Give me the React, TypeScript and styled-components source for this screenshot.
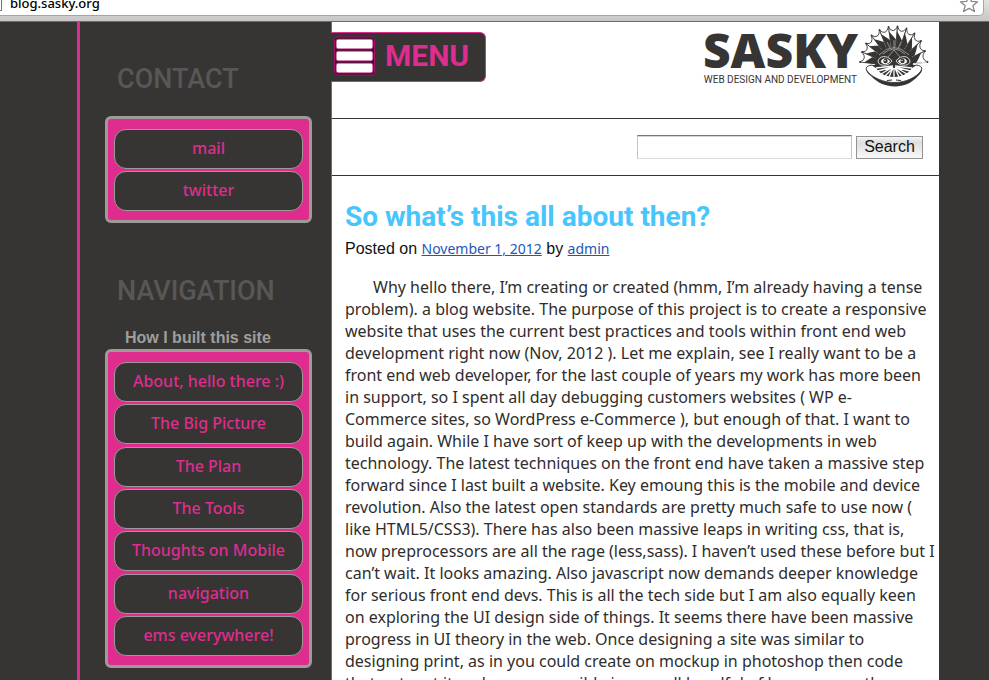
import React from "react";
import styled, { createGlobalStyle } from "styled-components";

const ink = "#373533";
const pink = "#de2d8e";
const sans = '"Noto Sans", sans-serif';
const grotesk = '"Liberation Sans", sans-serif';
const display = 'Roboto, "Noto Sans", sans-serif';

const GlobalStyle = createGlobalStyle`
  * { box-sizing: border-box; }
  body { margin: 0; background: ${ink}; color: #2f2d2c; font-family: ${sans}; }
  h1, h2, h3, p, ul { margin: 0; padding: 0; }
  ul { list-style: none; }
`;

const Page = styled.div`
  height: 100vh;
  display: flex;
  flex-direction: column;
  overflow: hidden;
`;

const BrowserBar = styled.div`
  flex: none;
  height: 22px;
  padding-right: 5px;
  background: linear-gradient(#e2e2e2, #c6c6c6);
  border-bottom: 1px solid #6b6b6b;
`;

const AddressField = styled.div`
  height: 16px;
  display: flex;
  justify-content: space-between;
  background: #fff;
  border: solid #a5a5a5;
  border-width: 0 1px 1px 0;
  border-radius: 0 0 5px 0;
  overflow: hidden;
`;

const PageIcon = styled.span`
  flex: none;
  width: 2px;
  height: 11px;
  border: solid #777;
  border-width: 0 1px 1px 0;
`;

const AddressInput = styled.input`
  flex: 1;
  height: 18px;
  margin-top: -6px;
  padding: 0 0 0 8px;
  border: 0;
  background: transparent;
  color: #000;
  font: 500 13px/18px ${sans};
  outline: 0;
`;

const StarButton = styled.button`
  width: 20px;
  height: 20px;
  margin: -6px 4px 0 0;
  padding: 0;
  border: 0;
  background: transparent;
`;

const Columns = styled.div`
  flex: 1;
  min-height: 0;
  display: flex;
  padding: 0 50px 0 77px;
`;

const Sidebar = styled.aside`
  flex: none;
  width: 254px;
  padding: 40px 19px 0 25px;
  border-left: 3px solid ${pink};
`;

const SideHeading = styled.h2`
  padding-left: 12px;
  color: #595756;
  font: 500 27px/34px ${display};
`;

const SideSection = styled.section`
  margin-bottom: 51px;
`;

const SideLabel = styled.h3`
  margin-top: 20px;
  padding-left: 20px;
  color: #a09e9b;
  font: bold 16px/20px ${grotesk};
`;

const LinkPanel = styled.ul<{ $top: number; $height: number }>`
  display: flex;
  flex-direction: column;
  justify-content: space-between;
  min-height: ${(p) => p.$height}px;
  margin-top: ${(p) => p.$top}px;
  padding: 10px 6px 9px;
  background: ${pink};
  border: 3px solid #9d9b98;
  border-radius: 6px;
`;

const PanelLink = styled.a`
  display: block;
  height: 40px;
  background: ${ink};
  border: 1px solid #9d9b98;
  border-radius: 12px;
  color: ${pink};
  font: 500 16px/36px ${sans};
  text-align: center;
  text-decoration: none;
`;

const Main = styled.main`
  flex: 1;
  min-width: 0;
  background: #fff;
  border-left: 1px solid ${pink};
`;

const Header = styled.header`
  height: 97px;
  display: flex;
  justify-content: space-between;
  align-items: flex-start;
  padding-right: 10px;
  border-bottom: 1px solid ${ink};
`;

const MenuButton = styled.button`
  display: flex;
  align-items: center;
  gap: 9px;
  width: 155px;
  height: 50px;
  margin: 10px 0 0 -1px;
  padding: 0 0 2px 3px;
  background: ${ink};
  border: 1px solid ${pink};
  border-left: 0;
  border-radius: 0 6px 6px 0;
  color: ${pink};
  font: 700 30px/34px ${display};
`;

const Logo = styled.a`
  display: flex;
  margin-top: 3px;
  gap: 1px;
  color: ${ink};
  text-decoration: none;
`;

const LogoText = styled.span`
  display: flex;
  flex-direction: column;
  align-items: center;
`;

const LogoName = styled.span`
  font: 800 48px/50px "Open Sans", sans-serif;
`;

const LogoTagline = styled.span`
  font: 10px/10px Roboto, sans-serif;
`;

const SearchForm = styled.form`
  height: 57px;
  display: flex;
  justify-content: flex-end;
  align-items: center;
  gap: 4px;
  padding-right: 16px;
  border-bottom: 1px solid ${ink};
`;

const SearchInput = styled.input`
  width: 215px;
  height: 24px;
  padding: 0 4px;
  background: #fff;
  border: 1px solid #c4c4c4;
  border-top-color: #777;
  border-bottom-color: #dcdcdc;
  box-shadow: inset 0 1px 0 #d5d5d5;
  font: 15px/20px ${grotesk};
`;

const SearchButton = styled.button`
  height: 23px;
  width: 67px;
  padding: 0 0 2px;
  border: 1px solid #939393;
  background: linear-gradient(#f6f6f6, #dedede 25%, #f8f8f8);
  color: #111;
  font: 16px/19px ${grotesk};
`;

const Article = styled.article`
  padding: 24px 12px 0 13px;
`;

const Title = styled.h1`
  color: #47c6fd;
  font: 700 28px/34px ${display};
  white-space: nowrap;
`;

const Meta = styled.p`
  margin-top: 4px;
  color: #111;
  font: 16px/22px ${grotesk};
`;

const MetaLink = styled.a`
  color: #1d57b8;
  font: 14px/22px ${sans};
`;

const Body = styled.p`
  margin-top: 16px;
  font: 16px/22px ${sans};
  text-indent: 28px;
  white-space: pre;
`;

const contactLinks = ["mail", "twitter"];
const siteLinks = [
  "About, hello there :)",
  "The Big Picture",
  "The Plan",
  "The Tools",
  "Thoughts on Mobile",
  "navigation",
  "ems everywhere!",
];

const postLines = [
  "Why hello there, I’m creating or created (hmm, I’m already having a tense",
  "problem). a blog website. The purpose of this project is to create a responsive",
  "website that uses the current best practices and tools within front end web",
  "development right now (Nov, 2012 ). Let me explain, see I really want to be a",
  "front end web developer, for the last couple of years my work has more been",
  "in support, so I spent all day debugging customers websites ( WP e-",
  "Commerce sites, so WordPress e-Commerce ), but enough of that. I want to",
  "build again. While I have sort of keep up with the developments in web",
  "technology. The latest techniques on the front end have taken a massive step",
  "forward since I last built a website. Key emoung this is the mobile and device",
  "revolution. Also the latest open standards are pretty much safe to use now (",
  "like HTML5/CSS3). There has also been massive leaps in writing css, that is,",
  "now preprocessors are all the rage (less,sass). I haven’t used these before but I",
  "can’t wait. It looks amazing. Also javascript now demands deeper knowledge",
  "for serious front end devs. This is all the tech side but I am also equally keen",
  "on exploring the UI design side of things. It seems there have been massive",
  "progress in UI theory in the web. Once designing a site was similar to",
  "designing print, as in you could create on mockup in photoshop then code",
  "that out, put it and use on possible in a small handful of browsers on the",
];

const MenuIcon = () => (
  <svg width="42" height="40" viewBox="0 0 42 40" aria-hidden="true">
    <rect x="0.5" y="1" width="40" height="38" rx="3" fill="#1f1a1d" stroke="#a90f68" />
    {[3, 15, 27].map((y) => (
      <rect key={y} x="2" y={y} width="37" height="10" rx="2" fill="#fff" stroke="#a90f68" />
    ))}
  </svg>
);

const tips = [
  [1, 37], [3, 27], [7, 18.5], [12.5, 10.5], [20.5, 5], [29.5, 2], [38.5, 1.5],
  [47.5, 3.5], [55.5, 8.5], [62, 16], [66, 26], [68.5, 37],
];
const cx = 35;
const cy = 41;
const toward = (x: number, y: number, k: number) => [cx + (x - cx) * k, cy + (y - cy) * k];

const FrillMark = () => (
  <svg width="70" height="64" viewBox="0 0 70 64" aria-hidden="true">
    {tips.slice(1).map(([x, y], i) => {
      const [px, py] = tips[i];
      const [qx, qy] = toward((x + px) / 2, (y + py) / 2, 0.8);
      const [ax, ay] = toward(px, py, 0.88);
      const [mx, my] = toward((x + px) / 2, (y + py) / 2, 0.76);
      const [bx, by] = toward(x, y, 0.66);
      return (
        <g key={i}>
          <path
            d={`M${cx} ${cy}L${px} ${py}Q${qx} ${qy} ${x} ${y}Z`}
            fill="#fff" stroke={ink} strokeWidth="0.9"
          />
          <path d={`M${cx} ${cy}L${ax} ${ay}L${mx} ${my}L${bx} ${by}Z`} fill={ink} />
          <path d={`M${cx} ${cy}L${x} ${y}`} stroke="#fff" strokeWidth="0.9" />
        </g>
      );
    })}
    {tips.map(([x, y], i) => (
      <circle key={i} cx={x} cy={y} r="0.9" fill={ink} />
    ))}
    <path d="M13 40C7 41 4 45 12 51C25 65 47 65 59 51C66 45 63 41 57 40Z" fill={ink} />
    <path d="M13 40C6 41 5 44 12 50C26 60 45 60 58 50C65 44 64 41 57 40C47 48 23 48 13 40Z" fill="#fff" stroke={ink} strokeWidth="0.9" />
    <path d="M16 39C15 28 25 22 35 22C45 22 55 28 54 39C53 47 44 52 35 52C26 52 17 47 16 39Z" fill={ink} />
    <path d="M20 30Q35 15 50 30M24 29Q35 19 46 29M29 32L35 25L41 32M35 15V24M28 17L31 23M42 17L39 23" fill="none" stroke="#aaa" strokeWidth="0.8" />
    <path d="M19 37C19 31 28 29 33 36C30 41 21 42 19 37ZM51 37C51 31 42 29 37 36C40 41 49 42 51 37Z" fill="none" stroke="#fff" strokeWidth="0.8" />
    <path d="M22 37C22 33 27 32 31 36C29 40 24 40 22 37ZM48 37C48 33 43 32 39 36C41 40 46 40 48 37Z" fill="#fff" />
    <circle cx="26.5" cy="36" r="2.2" fill={ink} />
    <circle cx="43.5" cy="36" r="2.2" fill={ink} />
    <circle cx="26" cy="35.5" r="0.7" fill="#fff" />
    <circle cx="43" cy="35.5" r="0.7" fill="#fff" />
    <path
      d="M34 41L17 43M34 42L19 46M34 42L22 49M34 43L26 51M34 43L30 52M35 43V53M36 43L40 52M36 43L44 51M36 42L48 49M36 42L51 46M36 41L53 43"
      stroke="#fff" strokeWidth="1.3"
    />
    <path d="M28 55.5L33 55M37 55L42 55.5" stroke={ink} strokeWidth="1.2" />
  </svg>
);

const LinkList = ({ items, top, height }: { items: string[]; top: number; height: number }) => (
  <LinkPanel $top={top} $height={height}>
    {items.map((item) => (
      <li key={item}>
        <PanelLink href="#">{item}</PanelLink>
      </li>
    ))}
  </LinkPanel>
);

export default function App() {
  return (
    <Page>
      <GlobalStyle />
      <BrowserBar>
        <AddressField>
          <PageIcon />
          <AddressInput aria-label="Address" defaultValue="blog.sasky.org" />
          <StarButton aria-label="Bookmark">
            <svg width="20" height="20" viewBox="0 0 20 20">
              <path
                d="M10 1.5L12.4 7.4L18.6 7.8L13.9 11.8L15.4 17.5L10 14.4L4.6 17.5L6.1 11.8L1.4 7.8L7.6 7.4Z"
                fill="#fff" stroke="#888" strokeWidth="1.3" strokeLinejoin="round"
              />
            </svg>
          </StarButton>
        </AddressField>
      </BrowserBar>
      <Columns>
        <Sidebar>
          <SideSection>
            <SideHeading>CONTACT</SideHeading>
            <LinkList items={contactLinks} top={20} height={107} />
          </SideSection>
          <SideSection>
            <SideHeading>NAVIGATION</SideHeading>
            <SideLabel>How I built this site</SideLabel>
            <LinkList items={siteLinks} top={1} height={319} />
          </SideSection>
        </Sidebar>
        <Main>
          <Header>
            <MenuButton>
              <MenuIcon />
              MENU
            </MenuButton>
            <Logo href="#">
              <LogoText>
                <LogoName>SASKY</LogoName>
                <LogoTagline>WEB DESIGN AND DEVELOPMENT</LogoTagline>
              </LogoText>
              <FrillMark />
            </Logo>
          </Header>
          <SearchForm>
            <SearchInput aria-label="Search" />
            <SearchButton type="button">Search</SearchButton>
          </SearchForm>
          <Article>
            <Title>So what’s this all about then?</Title>
            <Meta>
              Posted on <MetaLink href="#">November 1, 2012</MetaLink> by{" "}
              <MetaLink href="#">admin</MetaLink>
            </Meta>
            <Body>{postLines.join("\n")}</Body>
          </Article>
        </Main>
      </Columns>
    </Page>
  );
}
